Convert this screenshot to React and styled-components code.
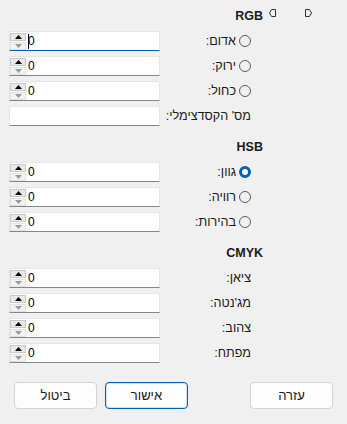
import React from 'react';
import styled, { createGlobalStyle } from 'styled-components';

const GlobalStyle = createGlobalStyle`
  html, body {
    margin: 0;
    padding: 0;
    background: #f0f0f0;
  }
  body {
    font-family: "Liberation Sans", "DejaVu Sans", sans-serif;
    font-size: 12px;
    color: #1b1b1b;
  }
`;

const Dialog = styled.div`
  width: 347px;
  height: 424px;
  box-sizing: border-box;
  padding-top: 6px;
  display: flex;
  flex-direction: column;
  gap: 11px;
`;

const Section = styled.div`
  display: grid;
  grid-template-columns: 151px 103px 1fr;
  grid-auto-rows: 20px;
  row-gap: 5px;
  padding-left: 9px;
`;

const HeaderRow = styled.div`
  grid-column: 2 / 4;
  display: flex;
  align-items: center;
`;

const Title = styled.div`
  width: 103px;
  text-align: right;
  font-weight: bold;
  font-size: 12.5px;
  color: #1b1b1b;
`;

const Arrows = styled.div`
  display: flex;
  gap: 29px;
  margin-left: 6px;
  margin-top: -7px;
`;

const Field = styled.div`
  grid-column: 1;
  position: relative;
  display: flex;
  align-items: center;
  background: #fff;
  box-sizing: border-box;
  border: 1px solid #e6e6e6;
  border-bottom: 1px solid ${p => (p.$focused ? '#005fb8' : '#868686')};
`;

const Spinner = styled.div`
  display: flex;
  flex-direction: column;
  gap: 1px;
  width: 16px;
`;

const SpinButton = styled.div`
  height: 8px;
  box-sizing: border-box;
  background: ${p => (p.$enabled ? '#e8e8e8' : '#f2f2f2')};
  border: 1px solid ${p => (p.$enabled ? '#c9c9c9' : '#e2e2e2')};
  display: flex;
  align-items: center;
  justify-content: center;
`;

const Value = styled.span`
  margin-left: 2px;
  font-size: 12px;
  color: #000;
  display: flex;
  align-items: center;
`;

const Caret = styled.span`
  display: inline-block;
  width: 1px;
  height: 15px;
  background: #000;
  margin-right: -1px;
`;

const Label = styled.div`
  grid-column: 2;
  direction: rtl;
  display: flex;
  align-items: center;
  gap: 3px;
  padding-right: 12px;
  white-space: nowrap;
  font-size: 12.6px;
  color: #1b1b1b;
`;

const Radio = styled.span`
  width: 12px;
  height: 12px;
  box-sizing: border-box;
  border-radius: 50%;
  flex: none;
  border: ${p => (p.$checked ? '3.5px solid #005fb8' : '1px solid #5c5c5c')};
  background: ${p => (p.$checked ? '#fff' : 'transparent')};
`;

const Footer = styled.div`
  display: flex;
  gap: 8px;
  padding: 8px 14px 0;
`;

const Spacer = styled.div`
  flex: 1;
`;

const Button = styled.div`
  width: 83px;
  height: 27px;
  box-sizing: border-box;
  border-radius: 4px;
  background: #fdfdfd;
  border: 1px solid ${p => (p.$primary ? '#005fb8' : '#d3d3d3')};
  box-shadow: ${p => (p.$primary ? 'inset 0 0 0 1px #cfe0f3' : 'none')};
  display: flex;
  align-items: center;
  justify-content: center;
  font-size: 13px;
  color: #1b1b1b;
`;

const Tri = ({ up, enabled }) => (
  <svg width="7" height="4" viewBox="0 0 7 4">
    <path
      d={up ? 'M0 4 L3.5 0 L7 4 Z' : 'M0 0 L3.5 4 L7 0 Z'}
      fill={enabled ? '#000' : '#9a9a9a'}
    />
  </svg>
);

const NavArrow = ({ dir }) => (
  <svg width="7" height="8" viewBox="0 0 7 8">
    <path
      d={dir === 'left' ? 'M6.5 0.5 H2.5 L0.5 4 L2.5 7.5 H6.5 Z' : 'M0.5 0.5 H4.5 L6.5 4 L4.5 7.5 H0.5 Z'}
      fill="none"
      stroke="#333"
      strokeWidth="1"
    />
  </svg>
);

const SpinField = ({ value = '0', focused }) => (
  <Field $focused={focused}>
    <Spinner>
      <SpinButton $enabled>
        <Tri up enabled />
      </SpinButton>
      <SpinButton>
        <Tri />
      </SpinButton>
    </Spinner>
    <Value>
      {focused && <Caret />}
      {value}
    </Value>
  </Field>
);

const Row = ({ label, radio, checked, focused, plain }) => (
  <>
    {plain ? <Field /> : <SpinField focused={focused} />}
    <Label>
      {radio && <Radio $checked={checked} />}
      <span>{label}</span>
    </Label>
  </>
);

const App = () => (
  <>
    <GlobalStyle />
    <Dialog>
      <Section>
        <HeaderRow>
          <Title>RGB</Title>
          <Arrows>
            <NavArrow dir="left" />
            <NavArrow dir="right" />
          </Arrows>
        </HeaderRow>
        <Row label="אדום:" radio focused />
        <Row label="ירוק:" radio />
        <Row label="כחול:" radio />
        <Row label="מס' הקסדצימלי:" plain />
      </Section>
      <Section>
        <HeaderRow>
          <Title>HSB</Title>
        </HeaderRow>
        <Row label="גוון:" radio checked />
        <Row label="רוויה:" radio />
        <Row label="בהירות:" radio />
      </Section>
      <Section>
        <HeaderRow>
          <Title>CMYK</Title>
        </HeaderRow>
        <Row label="ציאן:" />
        <Row label="מג'נטה:" />
        <Row label="צהוב:" />
        <Row label="מפתח:" />
      </Section>
      <Footer>
        <Button>ביטול</Button>
        <Button $primary>אישור</Button>
        <Spacer />
        <Button>עזרה</Button>
      </Footer>
    </Dialog>
  </>
);

export default App;
